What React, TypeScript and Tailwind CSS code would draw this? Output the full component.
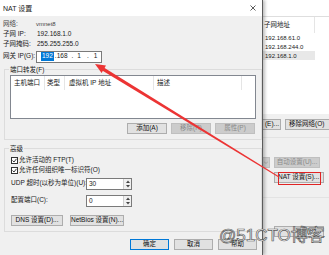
import React from 'react';

const FONT = "font-['Liberation_Sans','Noto_Sans_CJK_SC',sans-serif]";

type BtnProps = {
  children: React.ReactNode;
  className?: string;
  disabled?: boolean;
  focused?: boolean;
};

function Btn({ children, className = '', disabled = false, focused = false }: BtnProps) {
  const look = disabled
    ? 'bg-[#cccccc] border-[#bfbfbf] text-[#8a8a8a]'
    : focused
    ? 'bg-[#e1e1e1] border-[#0078d7] text-[#111]'
    : 'bg-[#e1e1e1] border-[#adadad] text-[#111]';
  return (
    <div className={`flex items-center justify-center h-[11px] shrink-0 text-[6.5px] leading-none border whitespace-nowrap overflow-hidden ${look} ${className}`}>
      {children}
    </div>
  );
}

function CheckBox({ label }: { label: string }) {
  return (
    <div className="flex items-center h-[10px] gap-[1px]">
      <div className="w-[7px] h-[7px] border border-[#333] bg-white flex items-center justify-center">
        <svg width="5" height="5" viewBox="0 0 5 5">
          <path d="M0.5 2.5 L2 4 L4.5 0.8" stroke="#222" strokeWidth="0.9" fill="none" />
        </svg>
      </div>
      <span className="text-[6.5px] leading-none">{label}</span>
    </div>
  );
}

function SpinRow({ label, value }: { label: string; value: string }) {
  return (
    <div className="flex items-center h-[11px]">
      <span className="w-[75px] text-[6.5px] leading-none">{label}</span>
      <div className="flex h-[12px] w-[46px] border border-[#7a7a7a] bg-white">
        <span className="flex-1 pl-[2px] text-[6.5px] leading-[9px]">{value}</span>
        <div className="w-[8px] flex flex-col border-l border-[#cfcfcf] bg-[#f0f0f0]">
          <div className="flex-1 flex items-center justify-center">
            <svg width="4" height="3" viewBox="0 0 4 3"><path d="M0 3 L2 0.5 L4 3 Z" fill="#444" /></svg>
          </div>
          <div className="flex-1 flex items-center justify-center">
            <svg width="4" height="3" viewBox="0 0 4 3"><path d="M0 0 L2 2.5 L4 0 Z" fill="#444" /></svg>
          </div>
        </div>
      </div>
    </div>
  );
}

export default function App() {
  return (
    <div className={`relative w-[329px] h-[255px] overflow-hidden flex bg-[#f0f0f0] text-[#1a1a1a] whitespace-nowrap ${FONT}`}>
      {/* NAT dialog */}
      <div className="relative z-10 w-[268px] h-full flex flex-col bg-[#f0f0f0] border-r border-[#5c5c5c] shadow-[2px_0_3px_rgba(0,0,0,0.25)]">
        <div className="h-[16px] shrink-0 bg-white flex items-center justify-between pl-[3px] pr-[6px]">
          <span className="text-[7px] leading-none">NAT 设置</span>
          <svg width="6" height="6" viewBox="0 0 6 6">
            <path d="M0.5 0.5 L5.5 5.5 M5.5 0.5 L0.5 5.5" stroke="#333" strokeWidth="0.8" />
          </svg>
        </div>

        <div className="flex-1 flex flex-col pl-[3px] pt-[3px]">
          <div className="grid grid-cols-[33px_1fr] text-[6.5px] leading-none">
            <span className="h-[10px] flex items-center text-[#444]">网络:</span>
            <span className="h-[10px] flex items-center text-[#444] text-[6px]">vmnet8</span>
            <span className="h-[10px] flex items-center">子网 IP:</span>
            <span className="h-[10px] flex items-center pl-[1px]">192.168.1.0</span>
            <span className="h-[10px] flex items-center">子网掩码:</span>
            <span className="h-[10px] flex items-center pl-[1px]">255.255.255.0</span>
          </div>
          <div className="mt-[2px] flex items-center h-[11px]">
            <span className="w-[33px] text-[6.5px] leading-none">网关 IP(G):</span>
            <div className="w-[66px] h-[12px] border border-[#7a7a7a] bg-white flex items-center text-[6.5px] leading-none">
              <span className="ml-[4px] bg-[#0078d7] text-white px-[1px] py-[1px]">192</span>
              <span className="ml-[1px]">.168</span>
              <span className="ml-[4px]">.</span>
              <span className="ml-[4px]">1</span>
              <span className="ml-[6px]">.</span>
              <span className="ml-[5px]">1</span>
            </div>
          </div>

          {/* Port forwarding group */}
          <div className="relative mt-[7px] ml-[1px] w-[258px] h-[71px] shrink-0 border border-[#dcdcdc] px-[5px] pt-[5px]">
            <span className="absolute -top-[5px] left-[4px] bg-[#f0f0f0] px-[1px] text-[6.5px] leading-[9px]">端口转发(F)</span>
            <div className="h-[44px] border border-[#828790] bg-white">
              <div className="flex h-[14px] text-[6.5px] leading-none">
                <div className="w-[34px] flex items-center pl-[3px] border-r border-[#e5e5e5]">主机端口</div>
                <div className="w-[20px] flex items-center pl-[2px] border-r border-[#e5e5e5]">类型</div>
                <div className="w-[89px] flex items-center pl-[4px] border-r border-[#e5e5e5]">虚拟机 IP 地址</div>
                <div className="w-[88px] flex items-center pl-[3px] border-r border-[#e5e5e5]">描述</div>
              </div>
            </div>
            <div className="mt-[4px] flex justify-end gap-[4px] pr-[1px]">
              <Btn className="w-[40px]">添加(A)</Btn>
              <Btn className="w-[40px]" disabled>移除(R)</Btn>
              <Btn className="w-[40px]" disabled>属性(P)</Btn>
            </div>
          </div>

          {/* Advanced group */}
          <div className="relative mt-[8px] ml-[1px] w-[258px] h-[84px] shrink-0 border border-[#dcdcdc] pl-[6px] pt-[6px] flex flex-col">
            <span className="absolute -top-[5px] left-[4px] bg-[#f0f0f0] px-[1px] text-[6.5px] leading-[9px]">高级</span>
            <CheckBox label="允许活动的 FTP(T)" />
            <CheckBox label="允许任何组织唯一标识符(O)" />
            <div className="mt-[3px]">
              <SpinRow label="UDP 超时(以秒为单位)(U):" value="30" />
            </div>
            <div className="mt-[6px]">
              <SpinRow label="配置端口(C):" value="0" />
            </div>
            <div className="mt-[9px] flex gap-[7px]">
              <Btn className="w-[52px]">DNS 设置(D)...</Btn>
              <Btn className="w-[54px]">NetBios 设置(N)...</Btn>
            </div>
          </div>

          <div className="mt-[7px] flex justify-end gap-[5px] pr-[5px]">
            <Btn className="w-[39px]" focused>确定</Btn>
            <Btn className="w-[39px]">取消</Btn>
            <Btn className="w-[39px]">帮助</Btn>
          </div>
        </div>
      </div>

      {/* Virtual network editor behind */}
      <div className="flex-1 flex flex-col bg-[#f0f0f0]">
        <div className="h-[17px] shrink-0 bg-white border-b border-[#dedede]" />
        <div className="h-[97px] shrink-0 bg-white flex flex-col text-[6.5px] leading-none">
          <div className="h-[16px] flex">
            <div className="w-[52px] flex items-center pl-[1px] border-r border-[#e5e5e5]">子网地址</div>
          </div>
          <div className="h-[9px] w-[52px] flex items-center pl-[2px] text-[6px]">192.168.61.0</div>
          <div className="h-[9px] w-[52px] flex items-center pl-[2px] text-[6px]">192.168.244.0</div>
          <div className="h-[9px] w-[52px] flex items-center pl-[2px] text-[6px] bg-[#e8e8e8]">192.168.1.0</div>
        </div>
        <div className="mt-[5px] flex">
          <Btn className="w-[18px] border-l-0 justify-end pr-[1px]">(E)...</Btn>
          <Btn className="ml-[4px] w-[45px] justify-start pl-[3px]">移除网络(O)</Btn>
        </div>
        <div className="mt-[7px] h-px bg-[#e3e3e3]" />
        <div className="mt-[19px] flex items-center">
          <Btn className="w-[7px] border-l-0" disabled>
            <svg width="4" height="3" viewBox="0 0 4 3"><path d="M0 0.5 L2 2.5 L4 0.5" stroke="#999" strokeWidth="0.7" fill="none" /></svg>
          </Btn>
          <Btn className="ml-[4px] w-[46px]" disabled>自动设置(U)...</Btn>
        </div>
        <div className="mt-[4px] pl-[11px]">
          <Btn className="w-[50px] justify-start pl-[3px]">NAT 设置(S)...</Btn>
        </div>
        <div className="mt-[14px] h-px bg-[#e3e3e3]" />
        <div className="mt-[28px] pl-[11px]">
          <Btn className="w-[50px] justify-end pr-[2px]">(P)...</Btn>
        </div>
      </div>

      {/* red annotation */}
      <div className="absolute left-[278px] top-[172px] w-[43px] h-[13px] border border-[#e02424] z-20" />
      <svg className="absolute inset-0 z-20 pointer-events-none" width="329" height="255" viewBox="0 0 329 255">
        <polygon points="279.2,176.6 278.8,177.4 102.2,70.4 103.8,67.6" fill="#ec3434" />
        <polygon points="95,64 106,65.6 101.6,73" fill="#ec3434" />
      </svg>

      {/* watermark */}
      <div className="absolute left-[219px] top-[227px] z-30 text-[17px] leading-none text-white [-webkit-text-stroke:0.7px_#5a5a5a] font-['Liberation_Sans','Noto_Sans_CJK_SC',sans-serif] whitespace-nowrap">
        @51CTO博客
      </div>
    </div>
  );
}
